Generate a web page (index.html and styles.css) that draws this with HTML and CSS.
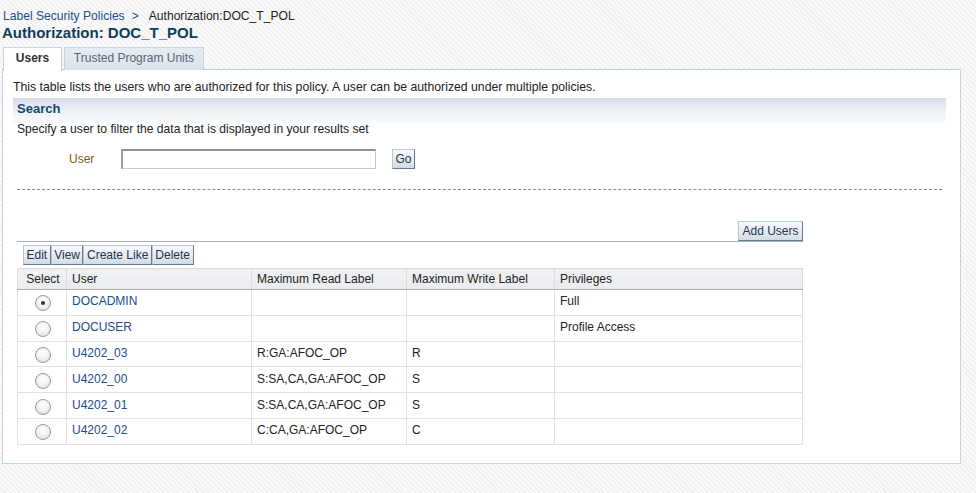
FILE: index.html
```html
<!DOCTYPE html>
<html>
<head>
<meta charset="utf-8">
<link rel="stylesheet" href="styles.css">
</head>
<body>
<div class="crumbs"><a class="link">Label Security Policies</a><span class="sep">&gt;</span><span>Authorization:DOC_T_POL</span></div>
<h1 class="title">Authorization: DOC_T_POL</h1>
<div class="tabs">
  <div class="tab tab-active">Users</div>
  <div class="tab tab-idle">Trusted Program Units</div>
</div>
<div class="panel">
  <p class="desc">This table lists the users who are authorized for this policy. A user can be authorized under multiple policies.</p>
  <div class="search-head">Search</div>
  <p class="hint">Specify a user to filter the data that is displayed in your results set</p>
  <div class="search-row">
    <label class="user-label">User</label>
    <input class="user-input" type="text">
    <button class="btn btn-go">Go</button>
  </div>
  <div class="dashed"></div>
  <div class="add-row"><button class="btn btn-add">Add Users</button></div>
  <div class="toolbar">
    <button class="btn tb">Edit</button><button class="btn tb">View</button><button class="btn tb">Create Like</button><button class="btn tb">Delete</button>
  </div>
  <table class="grid">
    <thead>
      <tr><th class="c-sel">Select</th><th class="c-user"><span>User</span></th><th class="c-read"><span>Maximum Read Label</span></th><th class="c-write"><span>Maximum Write Label</span></th><th class="c-priv"><span>Privileges</span></th></tr>
    </thead>
    <tbody>
      <tr><td class="c-sel"><span class="radio radio-on"></span></td><td><a class="link">DOCADMIN</a></td><td></td><td></td><td>Full</td></tr>
      <tr><td class="c-sel"><span class="radio"></span></td><td><a class="link">DOCUSER</a></td><td></td><td></td><td>Profile Access</td></tr>
      <tr><td class="c-sel"><span class="radio"></span></td><td><a class="link">U4202_03</a></td><td>R:GA:AFOC_OP</td><td>R</td><td></td></tr>
      <tr><td class="c-sel"><span class="radio"></span></td><td><a class="link">U4202_00</a></td><td>S:SA,CA,GA:AFOC_OP</td><td>S</td><td></td></tr>
      <tr><td class="c-sel"><span class="radio"></span></td><td><a class="link">U4202_01</a></td><td>S:SA,CA,GA:AFOC_OP</td><td>S</td><td></td></tr>
      <tr><td class="c-sel"><span class="radio"></span></td><td><a class="link">U4202_02</a></td><td>C:CA,GA:AFOC_OP</td><td>C</td><td></td></tr>
    </tbody>
  </table>
</div>
</body>
</html>
```
FILE: styles.css
```css
html, body { margin: 0; padding: 0; }
body {
  font-family: "Liberation Sans", Arial, sans-serif;
  font-size: 12px;
  color: #222;
  height: 493px;
  background: repeating-linear-gradient(45deg, #f1f1f1 0 1.5px, #fafafa 1.5px 3.5px);
}
.link { color: #1c4d8c; text-decoration: none; }
.crumbs { padding: 9px 0 0 3px; line-height: 15px; height: 15px; color: #222; font-size: 12.1px; }
.sep { margin: 0 10px 0 7px; color: #1c4d8c; }
.title {
  margin: 0; padding-left: 2px;
  font-size: 15px; font-weight: bold; color: #0f3d5e;
  line-height: 18px; height: 23px;
}
.tabs { display: flex; padding-left: 3px; gap: 2px; height: 23px; }
.tab {
  box-sizing: border-box; height: 23px; line-height: 20px;
  border: 1px solid #c5d3e2; border-bottom: none;
  font-size: 12px;
}
.tab-active { width: 59px; background: #fff; font-weight: bold; color: #333; text-align: center; position: relative; z-index: 1; height: 24px; }
.tab-idle { width: 140px; background: linear-gradient(#e6edf4, #dbe4ee); color: #5a6570; text-align: center; }
.panel {
  box-sizing: border-box;
  margin: -1px 15px 0 2px;
  height: 395px;
  background: #fff;
  border: 1px solid #c5d3e2;
  border-top-color: #b9cbe0;
}
.desc { margin: 0; padding: 10px 0 0 10px; line-height: 14px; height: 18px; font-size: 12.25px; }
.search-head {
  margin: 0 14px 0 10px; height: 25px; box-sizing: border-box;
  padding: 3px 0 0 4px;
  background: linear-gradient(#d8dde9, #eef1f6 55%, #fafbfc);
  font-weight: bold; font-size: 13px; color: #0f4a6e;
}
.hint { margin: 0; padding: 0 0 0 14px; line-height: 12px; height: 26px; font-size: 12.1px; }
.search-row { display: flex; align-items: center; height: 20px; padding-left: 66px; }
.user-label { color: #7d5e13; width: 52px; font-size: 12px; }
.user-input {
  box-sizing: border-box; width: 255px; height: 20px; margin: 0;
  border: 1px solid #c8c8c8; border-top: 2px solid #8f8f8f; border-left: 2px solid #a0a0a0;
  background: #fff; padding: 0;
}
.btn {
  font-family: "Liberation Sans", Arial, sans-serif; font-size: 12px;
  color: #1e3550; margin: 0; padding: 0 3px;
  box-sizing: border-box; height: 20px; line-height: 17px;
  background: linear-gradient(#f8fafc, #e3e9f0 60%, #d2dbe5);
  border: 1px solid #b9c5d3; border-right-color: #6c7b8c; border-bottom-color: #6c7b8c;
  border-radius: 0;
}
.btn-go { margin-left: 16px; width: 23px; padding: 0; }
.dashed { margin: 20px 18px 0 14px; border-top: 1px dashed #8c8c8c; height: 0; }
.add-row { width: 786px; margin: 31px 0 0 14px; display: flex; justify-content: flex-end; border-bottom: 1px solid #a8b0b8; height: 21px; box-sizing: border-box; }
.btn-add { width: 65px; height: 20px; padding: 0; }
.toolbar { display: flex; margin: 3px 0 0 20px; height: 20px; }
.tb { padding: 0 2.5px; height: 20px; }
.grid {
  margin: 3px 0 0 14px;
  border-collapse: collapse;
  width: 786px;
  table-layout: fixed;
  border: 1px solid #dcdcdc;
}
.grid th {
  height: 20px; padding: 0 0 0 5px;
  font-weight: normal; text-align: left;
  background: linear-gradient(#f1f2f4, #e9ebee);
  border: 1px solid #dcdcdc; border-left: 1px solid #8c96a0;
  border-bottom: 1px solid #aab0b6;
  color: #222;
}
.grid th:first-child { border-left-color: #dcdcdc; text-align: center; padding: 0 0 0 2px; }
.grid th span { background: #eceef0; }
.grid tbody tr { height: 25.8px; }
.grid td {
  padding: 0 0 2px 5px;
  border: 1px solid #e1e1e1;
  vertical-align: middle;
}
.grid td.c-sel { text-align: center; padding: 2px 0 0 2px; }
.c-sel { width: 46px; }
.c-user { width: 179px; }
.c-read { width: 149px; }
.c-write { width: 142px; }
.c-priv { width: auto; }
.radio {
  display: inline-block; width: 16px; height: 16px; box-sizing: border-box;
  border-radius: 50%; border: 1px solid #999;
  background: radial-gradient(circle at 50% 35%, #ffffff 0, #f3f3f3 45%, #dadada 100%);
  vertical-align: middle; position: relative;
}
.radio-on::after {
  content: ""; position: absolute; left: 5px; top: 5px; width: 4px; height: 4px; border-radius: 50%; background: #333;
}
```
